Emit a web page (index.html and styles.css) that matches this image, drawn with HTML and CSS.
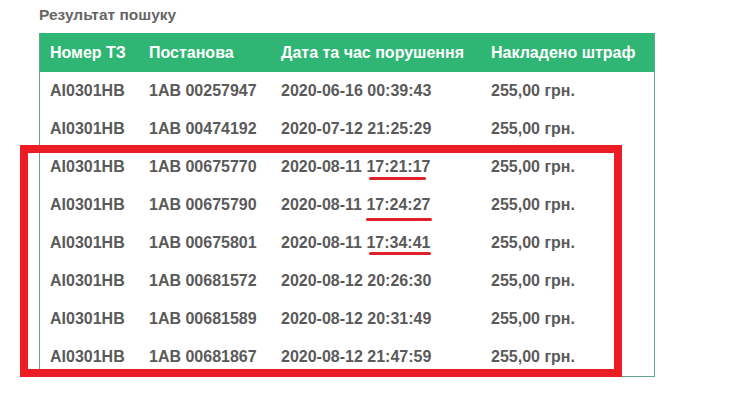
FILE: index.html
```html
<!DOCTYPE html>
<html lang="uk">
<head>
<meta charset="utf-8">
<title>Результат пошуку</title>
<link rel="stylesheet" href="styles.css">
</head>
<body>
<div class="page">
  <h2 class="title">Результат пошуку</h2>
  <table class="results">
    <thead>
      <tr>
        <th class="c1">Номер ТЗ</th>
        <th class="c2">Постанова</th>
        <th class="c3">Дата та час порушення</th>
        <th class="c4">Накладено штраф</th>
      </tr>
    </thead>
    <tbody>
      <tr><td>AI0301HB</td><td>1AB 00257947</td><td>2020-06-16 00:39:43</td><td>255,00 грн.</td></tr>
      <tr><td>AI0301HB</td><td>1AB 00474192</td><td>2020-07-12 21:25:29</td><td>255,00 грн.</td></tr>
      <tr><td>AI0301HB</td><td>1AB 00675770</td><td>2020-08-11 17:21:17</td><td>255,00 грн.</td></tr>
      <tr><td>AI0301HB</td><td>1AB 00675790</td><td>2020-08-11 17:24:27</td><td>255,00 грн.</td></tr>
      <tr><td>AI0301HB</td><td>1AB 00675801</td><td>2020-08-11 17:34:41</td><td>255,00 грн.</td></tr>
      <tr><td>AI0301HB</td><td>1AB 00681572</td><td>2020-08-12 20:26:30</td><td>255,00 грн.</td></tr>
      <tr><td>AI0301HB</td><td>1AB 00681589</td><td>2020-08-12 20:31:49</td><td>255,00 грн.</td></tr>
      <tr><td>AI0301HB</td><td>1AB 00681867</td><td>2020-08-12 21:47:59</td><td>255,00 грн.</td></tr>
    </tbody>
  </table>
  <div class="mark-box"></div>
  <div class="mark-line l1"></div>
  <div class="mark-line l2"></div>
  <div class="mark-line l3"></div>
</div>
</body>
</html>
```
FILE: styles.css
```css
html, body {
  margin: 0;
  padding: 0;
  background: #ffffff;
}
body {
  font-family: "Liberation Sans", Arial, sans-serif;
}
.page {
  position: relative;
  width: 740px;
  height: 409px;
  padding: 6px 0 0 39px;
  box-sizing: border-box;
}
.title {
  margin: 0 0 10px 0;
  font-size: 15.5px;
  line-height: 17px;
  font-weight: bold;
  color: #666666;
}
.results {
  border-collapse: collapse;
  width: 616px;
  border: 1px solid #5fa98a;
  border-top: none;
  table-layout: fixed;
}
.results th,
.results td {
  padding: 0 0 0 10px;
  text-align: left;
  font-size: 16px;
  font-weight: bold;
  white-space: nowrap;
}
.results th {
  height: 39px;
  background: #2fb574;
  color: #ffffff;
}
.results td {
  height: 38px;
  color: #5a5a5a;
}
.results .c1 { width: 89px; }
.results .c2 { width: 122px; }
.results .c3 { width: 200px; }
.mark-box {
  position: absolute;
  left: 20px;
  top: 145px;
  width: 602px;
  height: 232px;
  border: 8px solid #ec1c24;
  box-sizing: border-box;
}
.mark-line {
  position: absolute;
  height: 3px;
  background: #e2202b;
  border-radius: 2px;
}
.l1 { left: 369px; top: 177px; width: 57px; }
.l2 { left: 366px; top: 218px; width: 66px; }
.l3 { left: 369px; top: 252px; width: 62px; }
```
